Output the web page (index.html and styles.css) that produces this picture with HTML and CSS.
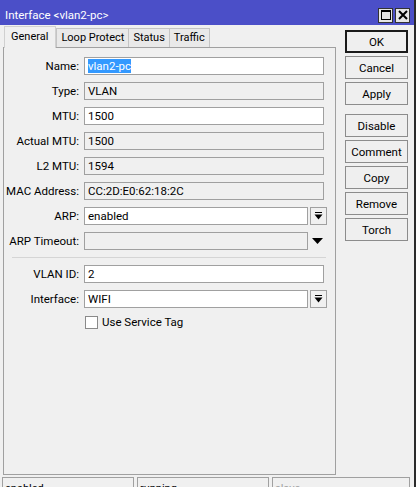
FILE: index.html
```html
<!DOCTYPE html>
<html lang="en">
<head>
    <meta charset="UTF-8">
    <title>Interface &lt;vlan2-pc&gt;</title>
    <link rel="stylesheet" href="styles.css">
</head>
<body>
    <div class="window">
        <div class="titlebar">
            <span class="title">Interface &lt;vlan2-pc&gt;</span>
            <div class="win-buttons">
                <div class="win-btn">
                    <svg width="12" height="12" viewBox="0 0 12 12"><rect x="1.5" y="1.5" width="9" height="9" fill="none" stroke="#000" stroke-width="1"/><line x1="1" y1="2" x2="11" y2="2" stroke="#000" stroke-width="2"/></svg>
                </div>
                <div class="win-btn">
                    <svg width="12" height="12" viewBox="0 0 12 12"><path d="M2 2 L10 10 M10 2 L2 10" stroke="#000" stroke-width="2"/></svg>
                </div>
            </div>
        </div>

        <div class="content">
            <div class="main">
                <div class="tabs">
                    <div class="tab active">General</div>
                    <div class="tab">Loop Protect</div>
                    <div class="tab">Status</div>
                    <div class="tab">Traffic</div>
                </div>
                <div class="panel">
                    <div class="row">
                        <label>Name:</label>
                        <div class="field"><span class="selected">vlan2-pc</span></div>
                    </div>
                    <div class="row">
                        <label>Type:</label>
                        <div class="field readonly">VLAN</div>
                    </div>
                    <div class="row">
                        <label>MTU:</label>
                        <div class="field">1500</div>
                    </div>
                    <div class="row">
                        <label>Actual MTU:</label>
                        <div class="field readonly">1500</div>
                    </div>
                    <div class="row">
                        <label>L2 MTU:</label>
                        <div class="field readonly">1594</div>
                    </div>
                    <div class="row">
                        <label>MAC Address:</label>
                        <div class="field readonly">CC:2D:E0:62:18:2C</div>
                    </div>
                    <div class="row">
                        <label>ARP:</label>
                        <div class="field short">enabled</div>
                        <div class="drop-btn">
                            <svg width="9" height="8" viewBox="0 0 9 8"><rect x="1" y="0" width="7" height="1" fill="#000"/><path d="M0.5 2.5 H8.5 L4.5 7.5 Z" fill="#000"/></svg>
                        </div>
                    </div>
                    <div class="row">
                        <label>ARP Timeout:</label>
                        <div class="field readonly short"></div>
                        <div class="drop-arrow">
                            <svg width="11" height="6" viewBox="0 0 11 6"><path d="M0 0 H11 L5.5 6 Z" fill="#000"/></svg>
                        </div>
                    </div>

                    <div class="separator"></div>

                    <div class="row">
                        <label>VLAN ID:</label>
                        <div class="field">2</div>
                    </div>
                    <div class="row">
                        <label>Interface:</label>
                        <div class="field short">WIFI</div>
                        <div class="drop-btn">
                            <svg width="9" height="8" viewBox="0 0 9 8"><rect x="1" y="0" width="7" height="1" fill="#000"/><path d="M0.5 2.5 H8.5 L4.5 7.5 Z" fill="#000"/></svg>
                        </div>
                    </div>
                    <div class="check-row">
                        <span class="checkbox"></span>
                        <span>Use Service Tag</span>
                    </div>
                </div>
            </div>

            <div class="side">
                <button class="btn default">OK</button>
                <button class="btn">Cancel</button>
                <button class="btn">Apply</button>
                <button class="btn spaced">Disable</button>
                <button class="btn">Comment</button>
                <button class="btn">Copy</button>
                <button class="btn">Remove</button>
                <button class="btn">Torch</button>
            </div>
        </div>

        <div class="statusbar">
            <div class="status">enabled</div>
            <div class="status">running</div>
            <div class="status dim">slave</div>
        </div>
    </div>
</body>
</html>
```

FILE: styles.css
```css
body {
    margin: 0;
    background-color: #fff;
    font-family: Roboto, "Liberation Sans", sans-serif;
    font-size: 11px;
    color: #000;
    height: 487px;
    overflow: hidden;
}
.window {
    width: 414px;
    height: 487px;
    background-color: #f0f0f0;
    border-right: 2px solid #2b2b2b;
    display: flex;
    flex-direction: column;
}
.titlebar {
    height: 25px;
    flex: none;
    background-color: #4b4fc8;
    color: #fff;
    font-size: 11.5px;
    display: flex;
    align-items: center;
    justify-content: space-between;
    padding: 0 4px 0 5px;
}
.title {
    margin-top: 4px;
}
.win-buttons {
    display: flex;
    gap: 2px;
    margin-top: 5px;
}
.win-btn {
    width: 13px;
    height: 13px;
    border: 1px solid #333;
    background-color: #e6e6e6;
    display: flex;
    align-items: center;
    justify-content: center;
}
.content {
    display: flex;
    flex: none;
    height: 450px;
}
.main {
    width: 333px;
    margin-left: 3px;
    display: flex;
    flex-direction: column;
}
.tabs {
    display: flex;
    height: 22px;
    align-items: flex-end;
    padding-left: 1px;
}
.tab {
    height: 18px;
    line-height: 18px;
    padding: 0 4px;
    border: 1px solid #c4c4c4;
    border-bottom: none;
    background-color: #e9e9e9;
    margin-right: -1px;
}
.tab.active {
    height: 21px;
    line-height: 20px;
    background-color: #f0f0f0;
    border-color: #d0d0d0;
    position: relative;
    top: 1px;
    margin-right: 0;
    padding: 0 7px 0 6px;
}
.panel {
    flex: 1;
    border: 1px solid #a0a0a0;
    padding-top: 9px;
}
.row {
    display: flex;
    align-items: center;
    height: 18px;
    margin-bottom: 7px;
}
.row label {
    width: 75px;
    text-align: right;
    white-space: nowrap;
    margin-right: 5px;
    font-size: 11.5px;
}
.field {
    width: 235px;
    height: 16px;
    line-height: 16px;
    border: 1px solid #a0a0a0;
    background-color: #fff;
    padding-left: 3px;
    white-space: nowrap;
    font-size: 11.5px;
}
.field.readonly {
    background-color: #f0f0f0;
}
.field.short {
    width: 219px;
}
.selected {
    background-color: #3399ff;
    color: #fff;
    display: inline-block;
    line-height: 14px;
}
.drop-btn {
    width: 15px;
    height: 16px;
    margin-left: 2px;
    border: 1px solid #a0a0a0;
    display: flex;
    align-items: center;
    justify-content: center;
}
.drop-arrow {
    width: 17px;
    display: flex;
    justify-content: center;
    margin-left: 1px;
}
.separator {
    height: 1px;
    background-color: #d5d5d5;
    margin: 3px 9px 7px 8px;
}
.check-row {
    display: flex;
    align-items: center;
    gap: 4px;
    margin-left: 81px;
    margin-top: 1px;
    font-size: 11.5px;
}
.checkbox {
    width: 11px;
    height: 11px;
    border: 1px solid #8a8a8a;
    background-color: #fff;
}
.side {
    margin-left: 9px;
    padding-top: 5px;
    display: flex;
    flex-direction: column;
    gap: 3px;
}
.btn {
    width: 63px;
    height: 23px;
    border: 1px solid #8c8c8c;
    background-color: #efefef;
    font-family: inherit;
    font-size: 11.5px;
    color: #000;
    padding: 0;
}
.btn.default {
    border: 2px solid #1a1a1a;
}
.btn.spaced {
    margin-top: 6px;
}
.statusbar {
    display: flex;
    gap: 3px;
    padding: 2px 0 0 2px;
}
.status {
    height: 14px;
    border: 1px solid #a0a0a0;
    padding: 5px 0 0 2px;
    line-height: 12px;
    width: 128px;
}
.status:last-child {
    width: 134px;
}
.status.dim {
    color: #a0a0a0;
}
```
